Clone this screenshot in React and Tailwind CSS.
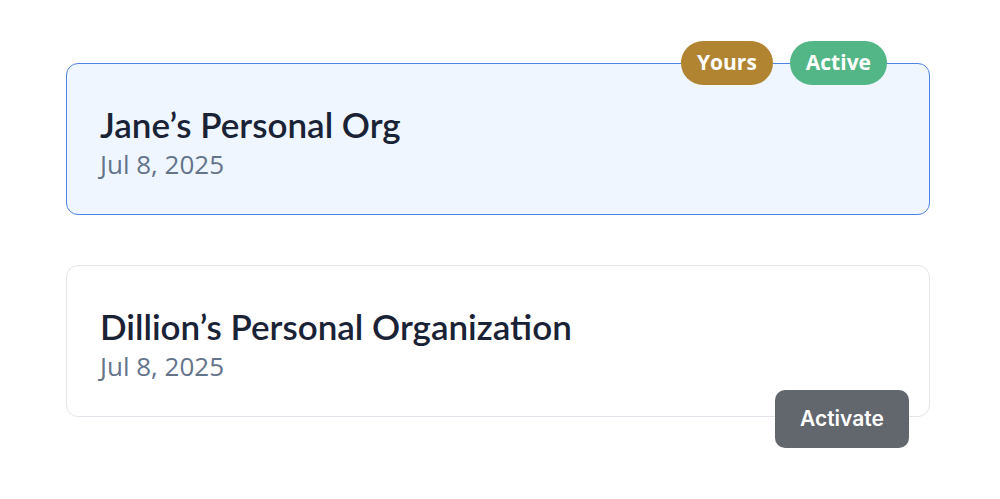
export default function App() {
  const orgs = [
    { name: "Jane’s Personal Org", date: "Jul 8, 2025", active: true, yours: true },
    { name: "Dillion’s Personal Organization", date: "Jul 8, 2025", active: false, yours: false },
  ];
  return (
    <div className="min-h-screen bg-white pt-[63px] pl-[66px] pr-[70px] flex flex-col gap-[50px]">
      {orgs.map((org) => (
        <div
          key={org.name}
          className={
            org.active
              ? "relative h-[152px] rounded-[12px] border-[1.5px] border-[#4f82e3] bg-[#eff6ff] px-[33px] pt-[6px] flex flex-col justify-center"
              : "relative h-[152px] rounded-[12px] border-[1.5px] border-[#e3e5ea] bg-white px-[33px] pt-[6px] flex flex-col justify-center"
          }
        >
          <h2 className="font-['Lato',sans-serif] text-[35px] font-semibold leading-[44px] text-[#1a2236]">
            {org.name}
          </h2>
          <p className="font-['Open_Sans',sans-serif] text-[26px] font-medium leading-[36px] text-[#64748b]">
            {org.date}
          </p>

          {org.active && (
            <div className="absolute right-[42px] top-[-23px] flex gap-[17px]">
              {org.yours && (
                <span className="h-[44px] px-[16px] rounded-full bg-[#b08430] text-white font-['Open_Sans',sans-serif] font-bold text-[21px] flex items-center">
                  Yours
                </span>
              )}
              <span className="h-[44px] px-[16px] rounded-full bg-[#52b686] text-white font-['Open_Sans',sans-serif] font-bold text-[21px] flex items-center">
                Active
              </span>
            </div>
          )}

          {!org.active && (
            <button className="absolute right-[20px] bottom-[-32px] h-[58px] w-[134px] rounded-[10px] bg-[#62666d] text-white font-['Inter',sans-serif] font-semibold text-[21px]">
              Activate
            </button>
          )}
        </div>
      ))}
    </div>
  );
}
